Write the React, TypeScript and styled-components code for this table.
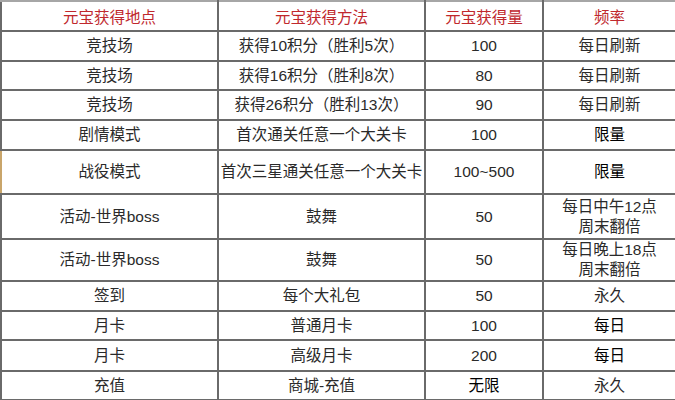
import React from 'react'
import styled, { createGlobalStyle } from 'styled-components'

const GlobalStyle = createGlobalStyle`
  html, body {
    margin: 0;
    padding: 0;
    background: #ffffff;
  }
  body {
    font-family: "Liberation Sans", "Noto Sans CJK SC", sans-serif;
  }
`

const Table = styled.table`
  width: 675px;
  border-collapse: collapse;
  table-layout: fixed;
  border: 2px solid #a6a6a6;
  font-size: 15.5px;
  color: #2a2a2a;
`

const Row = styled.tr<{ $h: number }>`
  height: ${({ $h }) => $h}px;
`

const HeadCell = styled.th`
  border: 2px solid #6a6a6a;
  border-top-color: #a6a6a6;
  color: #c0282d;
  font-weight: normal;
  text-align: center;
  padding: 0;
`

const Cell = styled.td<{ $strong?: boolean; $edge?: boolean }>`
  border: 2px solid #6a6a6a;
  ${({ $edge }) => ($edge ? 'border-left-color: #c9a56a;' : '')}
  text-align: center;
  vertical-align: middle;
  padding: 0;
  line-height: 20px;
  font-weight: 400;
  color: ${({ $strong }) => ($strong ? '#000000' : '#2a2a2a')};
`

type Item = {
  place: string
  way: string
  amount: string
  freq: string[]
  h: number
  strong?: boolean
  edge?: boolean
}

const rows: Item[] = [
  { place: '竞技场', way: '获得10积分（胜利5次）', amount: '100', freq: ['每日刷新'], h: 30 },
  { place: '竞技场', way: '获得16积分（胜利8次）', amount: '80', freq: ['每日刷新'], h: 29 },
  { place: '竞技场', way: '获得26积分（胜利13次）', amount: '90', freq: ['每日刷新'], h: 30 },
  { place: '剧情模式', way: '首次通关任意一个大关卡', amount: '100', freq: ['限量'], h: 30, strong: true },
  { place: '战役模式', way: '首次三星通关任意一个大关卡', amount: '100~500', freq: ['限量'], h: 44, strong: true, edge: true },
  { place: '活动-世界boss', way: '鼓舞', amount: '50', freq: ['每日中午12点', '周末翻倍'], h: 45 },
  { place: '活动-世界boss', way: '鼓舞', amount: '50', freq: ['每日晚上18点', '周末翻倍'], h: 42 },
  { place: '签到', way: '每个大礼包', amount: '50', freq: ['永久'], h: 30 },
  { place: '月卡', way: '普通月卡', amount: '100', freq: ['每日'], h: 29, strong: true },
  { place: '月卡', way: '高级月卡', amount: '200', freq: ['每日'], h: 31, strong: true },
  { place: '充值', way: '商城-充值', amount: '无限', freq: ['永久'], h: 29 },
]

export default function App() {
  return (
    <>
      <GlobalStyle />
      <Table>
        <colgroup>
          <col style={{ width: 217 }} />
          <col style={{ width: 207 }} />
          <col style={{ width: 118 }} />
          <col style={{ width: 133 }} />
        </colgroup>
        <thead>
          <Row $h={30}>
            <HeadCell>元宝获得地点</HeadCell>
            <HeadCell>元宝获得方法</HeadCell>
            <HeadCell>元宝获得量</HeadCell>
            <HeadCell>频率</HeadCell>
          </Row>
        </thead>
        <tbody>
          {rows.map((r, i) => (
            <Row key={i} $h={r.h}>
              <Cell $edge={r.edge}>{r.place}</Cell>
              <Cell>{r.way}</Cell>
              <Cell $strong={r.amount === '无限'}>{r.amount}</Cell>
              <Cell $strong={r.strong}>
                {r.freq.map((f, j) => (
                  <div key={j}>{f}</div>
                ))}
              </Cell>
            </Row>
          ))}
        </tbody>
      </Table>
    </>
  )
}
